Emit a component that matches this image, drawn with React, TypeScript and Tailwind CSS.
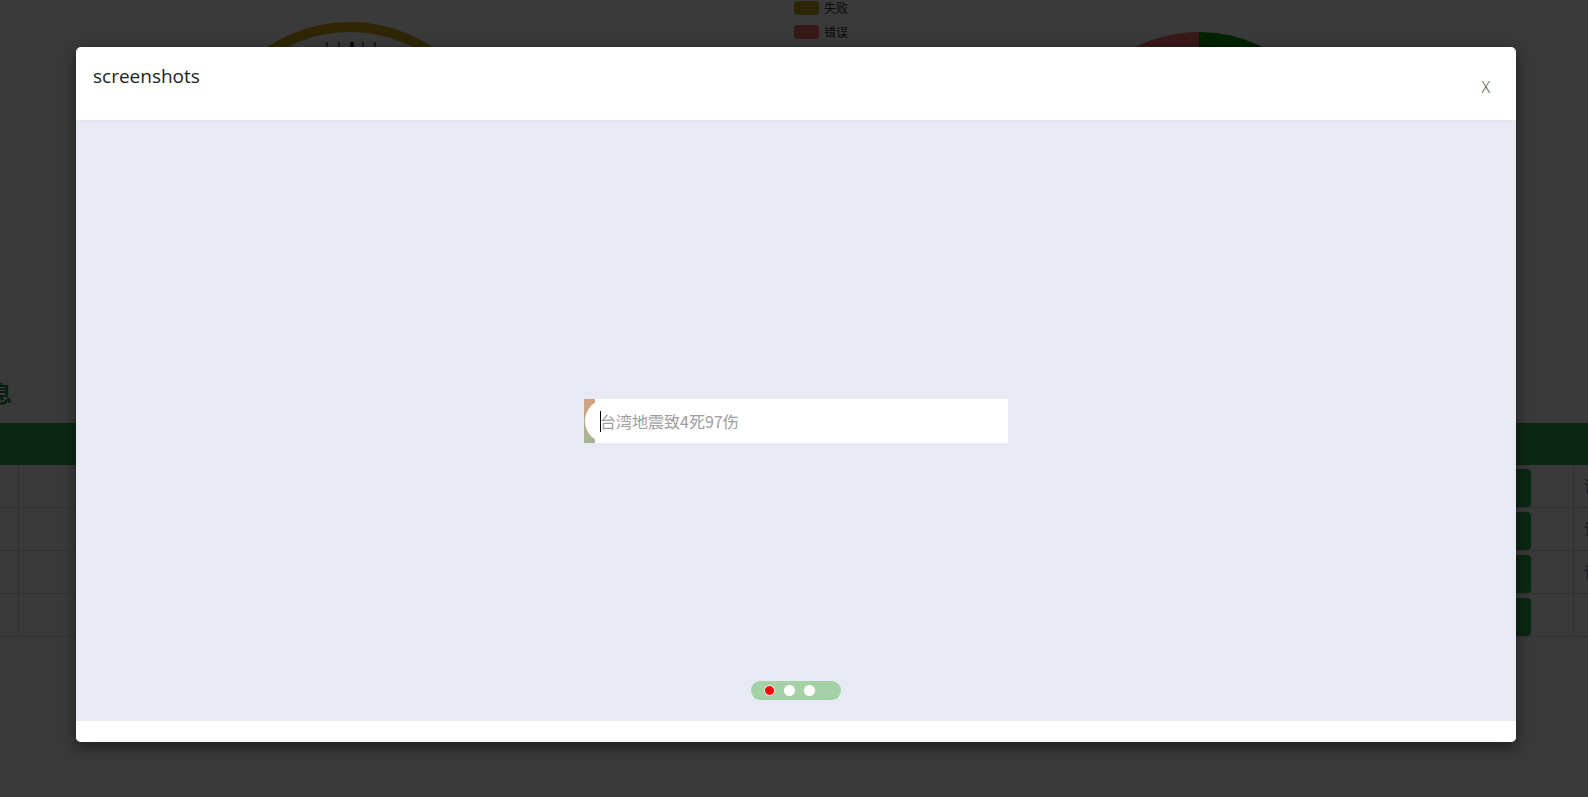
import React from 'react';

const rows = [0, 1, 2, 3];

// arc path helper for the gauge / pie drawings
const polar = (cx: number, cy: number, r: number, deg: number) => {
  const a = ((deg - 90) * Math.PI) / 180;
  return [cx + r * Math.cos(a), cy + r * Math.sin(a)];
};

const slice = (cx: number, cy: number, r: number, from: number, to: number) => {
  const [x1, y1] = polar(cx, cy, r, from);
  const [x2, y2] = polar(cx, cy, r, to);
  const large = to - from > 180 ? 1 : 0;
  return `M${cx} ${cy} L${x1} ${y1} A${r} ${r} 0 ${large} 1 ${x2} ${y2} Z`;
};

const arc = (cx: number, cy: number, r: number, from: number, to: number) => {
  const [x1, y1] = polar(cx, cy, r, from);
  const [x2, y2] = polar(cx, cy, r, to);
  const large = to - from > 180 ? 1 : 0;
  return `M${x1} ${y1} A${r} ${r} 0 ${large} 1 ${x2} ${y2}`;
};

const Gauge = () => (
  <svg width="308" height="330" viewBox="0 0 308 330" className="mt-[22px] ml-[196px] shrink-0">
    <path d={arc(154, 149, 144, -135, 135)} fill="none" stroke="#cba71a" strokeWidth="10" />
    {[131, 143, 156, 167, 179].map((x, i) => (
      <line key={x} x1={x} y1={20} x2={x} y2={30} stroke="#000" strokeWidth={i === 2 ? 3 : 1} />
    ))}
  </svg>
);

const Pie = () => (
  <svg width="284" height="284" viewBox="0 0 284 284" className="mt-[32px] ml-[203px] shrink-0">
    <path d={slice(142, 142, 142, 0, 200)} fill="#009900" />
    <path d={slice(142, 142, 142, 200, 360)} fill="#f86a6a" />
  </svg>
);

const Legend = () => (
  <div className="ml-[290px] mt-[1px] flex w-[60px] shrink-0 flex-col gap-[10px] text-[12px] leading-[14px] text-[#333] font-['Noto_Sans_CJK_SC',sans-serif]">
    <div className="flex items-center gap-[5px]">
      <span className="h-[14px] w-[25px] rounded-[3px] bg-[#cba71a]" />
      <span>失败</span>
    </div>
    <div className="flex items-center gap-[5px]">
      <span className="h-[14px] w-[25px] rounded-[3px] bg-[#f86a6a]" />
      <span>错误</span>
    </div>
  </div>
);

const Page = () => (
  <div className="w-full">
    <div className="flex h-[380px] items-start overflow-hidden">
      <Gauge />
      <Legend />
      <Pie />
    </div>
    <div className="h-[43px] overflow-hidden">
      <h3 className="-ml-[32px] pt-[1px] text-[22px] font-bold leading-[22px] text-[#2a8a44] font-['Noto_Sans_CJK_SC',sans-serif]">
        信息
      </h3>
    </div>
    <div className="h-[42px] bg-[#2cb04f]" />
    {rows.map((r) => (
      <div key={r} className="flex h-[43px] border-b border-[#dddddd]">
        <div className="w-[19px] border-r border-[#dddddd]" />
        <div className="flex-1" />
        <div className="flex w-[132px] items-start pt-[4px]">
          <div className="h-[38px] w-[90px] rounded-[4px] bg-[#2cb04f]" />
        </div>
        <div className="w-[15px] border-l border-[#dddddd] pl-[10px] pt-[10px] text-[16px] leading-[20px] text-[#337ab7] font-['Noto_Sans_CJK_SC',sans-serif]">
          {r < 3 ? '详' : ''}
        </div>
      </div>
    ))}
  </div>
);

const Shot = () => (
  <div className="relative h-[44px] w-[424px] overflow-hidden bg-white">
    <div className="absolute left-0 top-0 h-full w-[11px] bg-gradient-to-b from-[#d3a380] to-[#a4b497]" />
    <div className="absolute left-[1px] top-0 h-[44px] w-[44px] rounded-full bg-white" />
    <div className="relative flex h-full items-center pl-[16px]">
      <span className="mr-[-1px] h-[21px] w-px bg-black" />
      <span className="text-[16px] leading-[22px] text-[#9e9e9e] font-['Noto_Sans_CJK_SC',sans-serif]">
        台湾地震致4死97伤
      </span>
    </div>
  </div>
);

export default function App() {
  return (
    <div className="relative h-[797px] w-full overflow-hidden bg-white font-['Open_Sans',sans-serif]">
      <Page />
      <div className="absolute inset-0 bg-[rgba(0,0,0,0.773)]" />

      <div className="absolute left-[76px] top-[47px] w-[1440px] overflow-hidden rounded-[5px] bg-white shadow-[0_5px_15px_rgba(0,0,0,0.5)]">
        <div className="flex h-[74px] items-start justify-between border-b border-[#e3e5ea] pl-[17px] pr-[26px]">
          <h4 className="pt-[16px] text-[19px] leading-[26px] text-[#222]">screenshots</h4>
          <button className="mt-[30px] text-[16px] font-light leading-[20px] text-[#444]">X</button>
        </div>
        <div className="relative flex h-[600px] items-center justify-center bg-[#e7eaf2]">
          <Shot />
          <div className="absolute bottom-[21px] left-1/2 flex h-[19px] w-[90px] -translate-x-1/2 items-center gap-[9px] rounded-full bg-[#a4d1a5] pl-[13px]">
            <span className="h-[11px] w-[11px] rounded-full border border-white bg-[#ff0000]" />
            <span className="h-[11px] w-[11px] rounded-full bg-white" />
            <span className="h-[11px] w-[11px] rounded-full bg-white" />
          </div>
        </div>
        <div className="h-[21px] bg-white" />
      </div>
    </div>
  );
}
